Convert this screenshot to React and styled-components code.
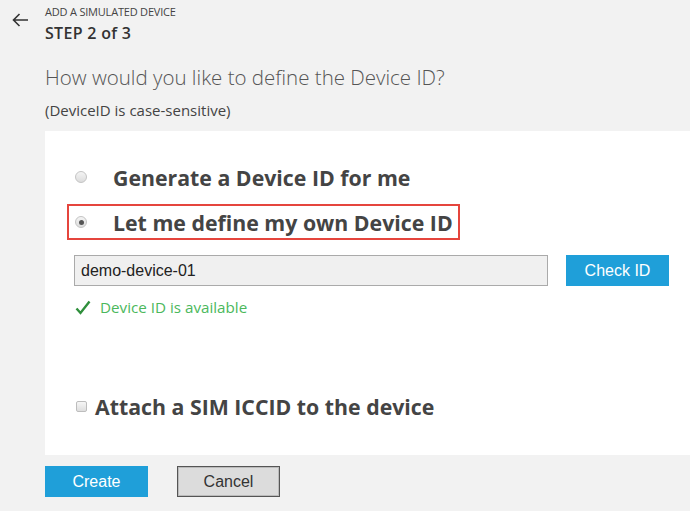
import React from "react";
import styled, { createGlobalStyle } from "styled-components";

const Global = createGlobalStyle`
  html, body { margin: 0; padding: 0; background: #f2f2f2; }
  body { font-family: "Open Sans", "Noto Sans", sans-serif; color: #333; }
  * { box-sizing: border-box; }
`;

const Page = styled.div`
  width: 690px;
  height: 511px;
  background: #f2f2f2;
  display: flex;
  flex-direction: column;
  overflow: hidden;
`;

const Header = styled.div`
  display: flex;
  align-items: flex-start;
  padding: 5px 0 0 12px;
  height: 131px;
`;

const BackButton = styled.div`
  width: 33px;
  height: 30px;
  display: flex;
  align-items: flex-start;
  padding-top: 8px;
`;

const HeaderText = styled.div`
  display: flex;
  flex-direction: column;
`;

const Eyebrow = styled.div`
  font-size: 11px;
  line-height: 14px;
  letter-spacing: -0.2px;
  color: #444;
`;

const Step = styled.div`
  font-size: 16px;
  font-weight: 600;
  line-height: 20px;
  letter-spacing: 0.3px;
  margin-top: 4px;
  color: #333;
`;

const Question = styled.div`
  font-size: 20.5px;
  font-weight: 300;
  color: #555;
  margin-top: 20px;
  line-height: 28px;
`;

const Hint = styled.div`
  font-size: 15px;
  color: #444;
  margin-top: 9px;
  line-height: 20px;
`;

const Panel = styled.div`
  margin-left: 45px;
  height: 324px;
  background: #fff;
  padding: 28px 0 0 22px;
  display: flex;
  flex-direction: column;
`;

const OptionRow = styled.div`
  display: flex;
  align-items: center;
  height: 36px;
  width: 393px;
  padding-left: 6px;
  border: 2px solid ${(p) => (p.$highlight ? "#e5453d" : "transparent")};
  margin-bottom: ${(p) => p.$gap || 0}px;
`;

const Radio = styled.span`
  width: 12px;
  height: 12px;
  border-radius: 50%;
  border: 1px solid #c4c4c4;
  background: linear-gradient(#f4f4f4, #dcdcdc);
  display: flex;
  align-items: center;
  justify-content: center;
  margin-right: 26px;
  flex: none;
  &::after {
    content: "";
    width: 5px;
    height: 5px;
    border-radius: 50%;
    background: ${(p) => (p.$checked ? "#555" : "transparent")};
  }
`;

const OptionLabel = styled.span`
  font-size: 21.3px;
  font-weight: 700;
  color: #444;
  white-space: nowrap;
`;

const IdRow = styled.div`
  display: flex;
  align-items: center;
  margin-top: 15px;
  padding-left: 7px;
`;

const IdInput = styled.div`
  width: 474px;
  height: 31px;
  border: 1px solid #aaa;
  background: #f0f0f0;
  font-family: "Liberation Sans", Arial, sans-serif;
  font-size: 16px;
  color: #222;
  display: flex;
  align-items: center;
  padding-left: 6px;
`;

const BlueButton = styled.div`
  width: ${(p) => p.$w || 103}px;
  height: 31px;
  background: #1f9fd9;
  color: #fff;
  font-family: "Liberation Sans", Arial, sans-serif;
  font-size: 16px;
  display: flex;
  align-items: center;
  justify-content: center;
  margin-left: ${(p) => p.$ml || 0}px;
`;

const Status = styled.div`
  display: flex;
  align-items: center;
  margin-top: 11px;
  padding-left: 8px;
  color: #4bb85c;
  font-size: 15.2px;
  gap: 9px;
`;

const CheckRow = styled.div`
  display: flex;
  align-items: center;
  margin-top: 75px;
  padding-left: 9px;
`;

const Box = styled.span`
  width: 11px;
  height: 11px;
  border: 1px solid #bdbdbd;
  border-radius: 2px;
  background: linear-gradient(#f6f6f6, #dedede);
  margin-right: 8px;
  flex: none;
`;

const Footer = styled.div`
  display: flex;
  padding: 11px 0 0 45px;
  gap: 29px;
`;

const GrayButton = styled.div`
  width: 103px;
  height: 31px;
  background: #dcdcdc;
  border: 1px solid #555;
  box-shadow: inset 0 0 0 1px #bbb;
  color: #333;
  font-family: "Liberation Sans", Arial, sans-serif;
  font-size: 16px;
  display: flex;
  align-items: center;
  justify-content: center;
`;

export default function App() {
  return (
    <Page>
      <Global />
      <Header>
        <BackButton>
          <svg width="17" height="14" viewBox="0 0 17 14">
            <path d="M16 7H1.5M7.5 1L1.5 7l6 6" fill="none" stroke="#333" strokeWidth="1.6" />
          </svg>
        </BackButton>
        <HeaderText>
          <Eyebrow>ADD A SIMULATED DEVICE</Eyebrow>
          <Step>STEP 2 of 3</Step>
          <Question>How would you like to define the Device ID?</Question>
          <Hint>(DeviceID is case-sensitive)</Hint>
        </HeaderText>
      </Header>
      <Panel>
        <OptionRow $gap={9}>
          <Radio />
          <OptionLabel>Generate a Device ID for me</OptionLabel>
        </OptionRow>
        <OptionRow $highlight>
          <Radio $checked />
          <OptionLabel>Let me define my own Device ID</OptionLabel>
        </OptionRow>
        <IdRow>
          <IdInput>demo-device-01</IdInput>
          <BlueButton $ml={18}>Check ID</BlueButton>
        </IdRow>
        <Status>
          <svg width="16" height="15" viewBox="0 0 16 15">
            <path d="M1.5 8.5l4 4.5L14.5 1.5" fill="none" stroke="#2f8f3c" strokeWidth="2.4" />
          </svg>
          Device ID is available
        </Status>
        <CheckRow>
          <Box />
          <OptionLabel>Attach a SIM ICCID to the device</OptionLabel>
        </CheckRow>
      </Panel>
      <Footer>
        <BlueButton>Create</BlueButton>
        <GrayButton>Cancel</GrayButton>
      </Footer>
    </Page>
  );
}
